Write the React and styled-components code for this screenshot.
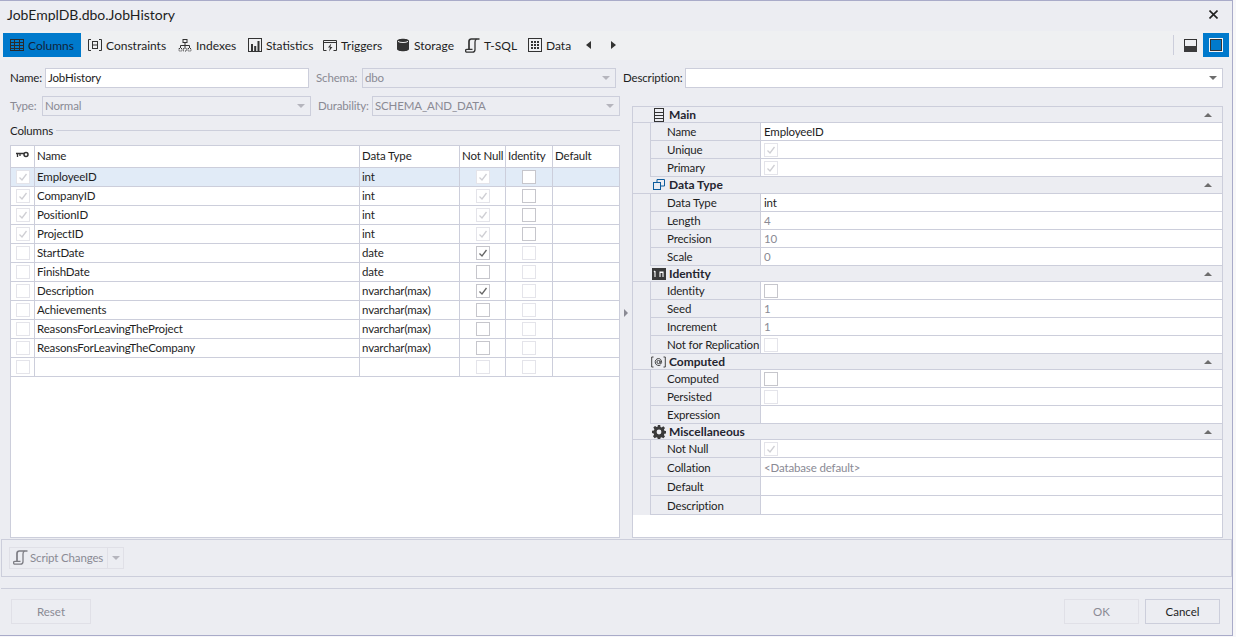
import React from "react";
import styled, { createGlobalStyle } from "styled-components";

const columns = [
  { key: true, name: "EmployeeID", type: "int", notNull: "off-checked", identity: "on" },
  { key: true, name: "CompanyID", type: "int", notNull: "off-checked", identity: "on" },
  { key: true, name: "PositionID", type: "int", notNull: "off-checked", identity: "on" },
  { key: true, name: "ProjectID", type: "int", notNull: "off-checked", identity: "on" },
  { name: "StartDate", type: "date", notNull: "checked", identity: "off" },
  { name: "FinishDate", type: "date", notNull: "on", identity: "off" },
  { name: "Description", type: "nvarchar(max)", notNull: "checked", identity: "off" },
  { name: "Achievements", type: "nvarchar(max)", notNull: "on", identity: "off" },
  { name: "ReasonsForLeavingTheProject", type: "nvarchar(max)", notNull: "on", identity: "off" },
  { name: "ReasonsForLeavingTheCompany", type: "nvarchar(max)", notNull: "on", identity: "off" },
  { name: "", type: "", notNull: "off", identity: "off" },
];

const TableIcon = ({ color = "#2b2b2b" }) => (
  <svg width="14" height="14" viewBox="0 0 14 14" fill="none" stroke={color}>
    <rect x="0.5" y="1.5" width="13" height="11" />
    <path d="M0.5 4.5h13M0.5 7.5h13M0.5 10.5h13M4.5 2v10M9.5 2v10" />
  </svg>
);

const ConstraintsIcon = () => (
  <svg width="14" height="14" viewBox="0 0 14 14" fill="none" stroke="#333">
    <path d="M3 1.5H0.5v11H3M11 1.5h2.5v11H11" />
    <rect x="4.5" y="3.5" width="5" height="7" />
    <path d="M4.5 7h5" />
  </svg>
);

const IndexesIcon = () => (
  <svg width="14" height="14" viewBox="0 0 14 14" fill="none" stroke="#333">
    <rect x="5" y="1.5" width="4" height="3" />
    <path d="M7 4.5v3M2.5 10V7.5h9V10M7 7.5V10" />
    <path d="M1 10.5h3v2.5H1zM5.5 10.5h3v2.5h-3zM10 10.5h3v2.5h-3z" strokeDasharray="1 1" />
  </svg>
);

const StatisticsIcon = () => (
  <svg width="14" height="14" viewBox="0 0 14 14" fill="none">
    <rect x="0.5" y="0.5" width="13" height="13" stroke="#333" />
    <path d="M3 6h2v7H3zM6.2 8h2v5h-2zM9.5 3h2v10h-2z" fill="#333" />
  </svg>
);

const TriggersIcon = () => (
  <svg width="14" height="14" viewBox="0 0 14 14" fill="none">
    <path d="M0.5 12.5v-10h13v10h-3M0.5 12.5h3M0.5 4.5h13" stroke="#333" />
    <path d="M8.2 5.5 5 9.5h2l-1 4 3.4-4.6H7.4z" fill="#333" />
  </svg>
);

const StorageIcon = () => (
  <svg width="14" height="14" viewBox="0 0 14 14">
    <path d="M1 3c0-3 12-3 12 0v8c0 3-12 3-12 0z" fill="#333" />
    <path d="M2 3.4c1.5 1.5 8.500 1.500 10 0" fill="none" stroke="#eee" />
  </svg>
);

const ScriptIcon = ({ color = "#333" }) => (
  <svg width="15" height="15" viewBox="0 0 15 15" fill="none">
    <path d="M4 11.500V3.500C4 2 5 1 6.300 1H14.500" stroke={color} strokeWidth="1.700" />
    <path d="M11.500 1.200C10.400 1.600 10 2.500 10 4v7.500c0 1.500-1 2.700-2.500 2.700H2c-1 0-1.500-.8-1.500-1.500S1 11.300 2 11.300h5.500" stroke={color} strokeWidth="1.300" />
  </svg>
);

const DataIcon = () => (
  <svg width="14" height="14" viewBox="0 0 14 14" fill="none">
    <rect x="0.5" y="0.5" width="13" height="13" stroke="#333" />
    <path d="M3 3h2v2H3zM6 3h2v2H6zM9 3h2v2H9zM3 6h2v2H3zM6 6h2v2H6zM9 6h2v2H9zM3 9h2v2H3zM6 9h2v2H6zM9 9h2v2H9z" fill="#333" />
  </svg>
);

const KeyIcon = () => (
  <svg width="13" height="8" viewBox="0 0 13 8" fill="none">
    <path d="M0 2.500h8M1.500 2.500V6M4 2.500V5" stroke="#333" strokeWidth="1.300" />
    <circle cx="10" cy="3.500" r="2" stroke="#333" strokeWidth="1.500" />
  </svg>
);

const MainGroupIcon = () => (
  <svg width="10" height="14" viewBox="0 0 10 14" fill="none" stroke="#333">
    <rect x="0.500" y="0.500" width="9" height="13" />
    <path d="M0.500 4.500h9M0.500 7.500h9M0.500 10.500h9" />
  </svg>
);

const DataTypeGroupIcon = () => (
  <svg width="12" height="11" viewBox="0 0 12 11" fill="none" stroke="#0e5c9c">
    <rect x="0.500" y="3.500" width="7" height="7" />
    <path d="M4 3.500V0.500h7.500v6.500H7.500" />
  </svg>
);

const IdentityGroupIcon = () => (
  <svg width="14" height="12" viewBox="0 0 14 12">
    <rect width="14" height="12" fill="#3a3a3a" />
    <path d="M3 3v6M2 4l1-1M8 9V4h3v5M8 4.500h3" fill="none" stroke="#fff" strokeWidth="1.100" />
  </svg>
);

const ComputedGroupIcon = () => (
  <svg width="15" height="12" viewBox="0 0 15 12" fill="none" stroke="#444">
    <path d="M2.500 1H.7v10h1.800M12.500 1h1.800v10h-1.800" />
    <circle cx="7.500" cy="6" r="1.600" />
    <path d="M9.100 4.500V7c0 1 1.500 1 1.500-.5C10.600 4 9.300 2.500 7.500 2.500A3.500 3.500 0 1 0 9.500 9" />
  </svg>
);

const GearGroupIcon = () => (
  <svg width="14" height="14" viewBox="0 0 14 14">
    <path
      d="M5.800 0h2.400l.3 1.900 1.200.5 1.600-1.100 1.700 1.700-1.100 1.600.5 1.200 1.900.3v2.400l-1.900.3-.5 1.200 1.100 1.600-1.700 1.700-1.600-1.100-1.200.5-.3 1.900H5.800l-.3-1.900-1.200-.5-1.600 1.100L1 11.200l1.100-1.600-.5-1.200L0 8.100V5.700l1.900-.3.500-1.200L1.300 2.600 3 .9l1.600 1.100 1.200-.5z"
      fill="#3a3a3a"
    />
    <circle cx="7" cy="7" r="2.400" fill="#eeeef2" />
  </svg>
);

const GlobalStyle = createGlobalStyle`
  html, body {
    margin: 0;
    padding: 0;
    background: #f7f7f9;
  }
  body {
    font-family: "Lato", "Liberation Sans", sans-serif;
    font-size: 11.5px;
    letter-spacing: -0.15px;
    color: #1e1e1e;
  }
`;

const Window = styled.div`
  width: 1233px;
  height: 636px;
  box-sizing: border-box;
  background: #ecedf2;
  border-top: 1px solid #a9abc9;
  border-right: 1px solid #a9abc9;
  border-bottom: 1px solid #a9abc9;
  display: flex;
  flex-direction: column;
  overflow: hidden;
`;

const TitleBar = styled.div`
  height: 30px;
  flex: none;
  box-sizing: border-box;
  display: flex;
  align-items: center;
  justify-content: space-between;
  padding: 0 14px 4px 7px;
  font-size: 14px;
  letter-spacing: 0;
`;

const CloseGlyph = styled.svg`
  width: 9px;
  height: 9px;
`;

const Toolbar = styled.div`
  height: 29px;
  flex: none;
  box-sizing: border-box;
  background: #eff0f2;
  display: flex;
  align-items: center;
  padding: 0 3px 1px;
  font-size: 12px;
  letter-spacing: 0;
`;

const ToolButton = styled.div`
  height: 24px;
  box-sizing: border-box;
  width: ${(p) => p.$w}px;
  flex: none;
  display: flex;
  align-items: center;
  gap: 4px;
  padding-left: 7px;
  background: ${(p) => (p.$active ? "#007acc" : "transparent")};
  color: ${(p) => (p.$active ? "#10233a" : "#1e1e1e")};
  white-space: nowrap;
`;

const ArrowButton = styled.div`
  width: 25px;
  height: 24px;
  flex: none;
  display: flex;
  align-items: center;
  justify-content: center;
`;

const ToolbarSpacer = styled.div`
  flex: 1;
`;

const ToolbarDivider = styled.div`
  width: 1px;
  height: 20px;
  background: #cccedb;
  margin-right: 10px;
`;

const LayoutButton = styled.div`
  width: 26px;
  height: 24px;
  flex: none;
  display: flex;
  align-items: center;
  justify-content: center;
  margin-left: ${(p) => p.$gap || 0}px;
  background: ${(p) => (p.$active ? "#007acc" : "transparent")};
`;

const Body = styled.div`
  flex: none;
  height: 478px;
  box-sizing: border-box;
  display: flex;
  padding: 8px 9px 0 10px;
`;

const LeftPane = styled.div`
  width: 610px;
  flex: none;
  display: flex;
  flex-direction: column;
`;

const FormRow = styled.div`
  height: 20px;
  flex: none;
  display: flex;
  align-items: center;
  margin-bottom: 8px;
`;

const FieldLabel = styled.div`
  width: ${(p) => p.$w}px;
  margin-left: ${(p) => p.$ml || 0}px;
  margin-bottom: 1px;
  flex: none;
  color: ${(p) => (p.$disabled ? "#8a8a94" : "#1e1e1e")};
`;

const Field = styled.div`
  width: ${(p) => (p.$w ? `${p.$w}px` : "auto")};
  flex: ${(p) => (p.$w ? "none" : 1)};
  height: 20px;
  box-sizing: border-box;
  display: flex;
  align-items: center;
  justify-content: space-between;
  padding: 0 5px 1px 2px;
  border: 1px solid #cccedb;
  background: ${(p) => (p.$disabled ? "#ecedf2" : "#fff")};
  color: ${(p) => (p.$disabled ? "#8a8a94" : "#1e1e1e")};
`;

const DownCaret = styled.div`
  width: 0;
  height: 0;
  border-left: 4px solid transparent;
  border-right: 4px solid transparent;
  border-top: 4px solid ${(p) => (p.$disabled ? "#b5b5bd" : "#6d6d6d")};
`;

const SectionLabel = styled.div`
  display: flex;
  align-items: center;
  gap: 3px;
  height: 14px;
  margin-top: -1px;
  margin-bottom: 8px;
  &::after {
    content: "";
    flex: 1;
    height: 1px;
    background: #cccedb;
  }
`;

const GridFrame = styled.div`
  flex: none;
  height: 393px;
  box-sizing: border-box;
  border: 1px solid #cccedb;
  background: #fff;
`;

const GridRow = styled.div`
  display: grid;
  grid-template-columns: 24px 325px 100px 46px 47px 1fr;
  height: ${(p) => p.$h}px;
  box-sizing: border-box;
  border-bottom: 1px solid #cccedb;
  background: ${(p) => (p.$selected ? "#e1ebf7" : "#fff")};
`;

const GridHeaderRow = styled(GridRow)`
  & > div {
    padding-bottom: 3px;
  }
`;

const GridCell = styled.div`
  display: flex;
  align-items: center;
  justify-content: ${(p) => (p.$center ? "center" : "flex-start")};
  padding-left: ${(p) => (p.$center ? 0 : 2)}px;
  padding-bottom: ${(p) => (p.$center ? 0 : 1)}px;
  border-right: 1px solid #cccedb;
  overflow: hidden;
  white-space: nowrap;
  &:last-child {
    border-right: none;
  }
`;

const CheckFrame = styled.div`
  width: 14px;
  height: 14px;
  box-sizing: border-box;
  background: #fff;
  border: 1px solid ${(p) => (p.$faint ? "#e4e4ea" : "#c6c6cc")};
  display: flex;
  align-items: center;
  justify-content: center;
`;

const Check = ({ state }) => {
  const faint = state === "off" || state === "off-checked";
  const checked = state === "checked" || state === "off-checked";
  return (
    <CheckFrame $faint={faint}>
      {checked && (
        <svg width="10" height="10" viewBox="0 0 10 10" fill="none">
          <path d="M1.500 5.500 4 8l4.500-6" stroke={faint ? "#cfcfd4" : "#666"} strokeWidth="1.300" />
        </svg>
      )}
    </CheckFrame>
  );
};

const Splitter = styled.div`
  width: 12px;
  flex: none;
  display: flex;
  align-items: center;
  justify-content: center;
  padding-bottom: 18px;
  &::before {
    content: "";
    border-top: 4px solid transparent;
    border-bottom: 4px solid transparent;
    border-left: 4px solid #8a8a94;
  }
`;

const RightPane = styled.div`
  flex: 1;
  min-width: 0;
  display: flex;
  flex-direction: column;
`;

const DescriptionRow = styled(FormRow)`
  margin-left: 3px;
  margin-bottom: 18px;
`;

const RightBottom = styled.div`
  height: 432px;
  flex: none;
  display: flex;
`;

const PropertyPanel = styled.div`
  flex: 1;
  min-width: 0;
  box-sizing: border-box;
  border: 1px solid #cccedb;
  background: #fff;
  display: flex;
  flex-direction: column;
`;

const GroupHeader = styled.div`
  height: ${(p) => p.$h}px;
  flex: none;
  box-sizing: border-box;
  padding-bottom: ${(p) => (p.$h > 16 ? 1 : 0)}px;
  background: #ecedf2;
  border-bottom: 1px solid #cccedb;
  display: grid;
  grid-template-columns: 36px 1fr 18px;
  align-items: center;
  font-size: 12px;
  font-weight: 700;
  letter-spacing: 0;
  color: #252530;
`;

const GroupIconSlot = styled.div`
  display: flex;
  align-items: center;
  justify-content: center;
  padding: 0 3px 0 18px;
`;

const UpCaret = styled.div`
  width: 0;
  height: 0;
  border-left: 4px solid transparent;
  border-right: 4px solid transparent;
  border-bottom: 4px solid #6d6d6d;
`;

const PropRow = styled.div`
  height: ${(p) => (p.$tall ? 19 : 18)}px;
  flex: none;
  box-sizing: border-box;
  display: grid;
  grid-template-columns: 17px 111px 1fr;
  background: #ecedf2;
`;

const PropLabel = styled.div`
  display: flex;
  align-items: center;
  padding-left: 16px;
  border-left: 1px solid #cccedb;
  border-bottom: 1px solid #cccedb;
  border-right: 1px solid #cccedb;
  white-space: nowrap;
`;

const PropValue = styled.div`
  display: flex;
  align-items: center;
  padding-left: 3px;
  background: #fff;
  border-bottom: 1px solid #cccedb;
  color: ${(p) => (p.$muted ? "#8a8a94" : "#1e1e1e")};
`;

const ScriptBar = styled.div`
  height: 38px;
  flex: none;
  box-sizing: border-box;
  margin: 1px 0 0 1px;
  border: 1px solid #cccedb;
  display: flex;
  align-items: center;
  padding-left: 7px;
`;

const ScriptButton = styled.div`
  height: 22px;
  box-sizing: border-box;
  border: 1px solid #e0e0e7;
  display: flex;
  align-items: center;
  color: #8a8a94;
`;

const ScriptMain = styled.div`
  width: 98px;
  height: 100%;
  box-sizing: border-box;
  display: flex;
  align-items: center;
  gap: 2px;
  padding: 0 0 1px 3px;
  border-right: 1px solid #e0e0e7;
  white-space: nowrap;
`;

const ScriptCaret = styled.div`
  width: 15px;
  display: flex;
  justify-content: center;
`;

const Footer = styled.div`
  flex: 1;
  margin-top: 11px;
  margin-left: 1px;
  border-top: 1px solid #cccedb;
  display: flex;
  align-items: flex-start;
  padding: 10px 12px 0 10px;
`;

const DialogButton = styled.button`
  width: ${(p) => p.$w}px;
  height: 25px;
  margin-left: ${(p) => p.$ml || 0}px;
  padding: 0;
  font: inherit;
  background: transparent;
  border: 1px solid ${(p) => (p.$disabled ? "#e0e0e7" : "#cccedb")};
  color: ${(p) => (p.$disabled ? "#8a8a94" : "#1e1e1e")};
`;

const FooterSpacer = styled.div`
  flex: 1;
`;

const Properties = [
  {
    title: "Main",
    height: 16,
    icon: <MainGroupIcon />,
    rows: [
      { label: "Name", value: "EmployeeID" },
      { label: "Unique", check: "off-checked" },
      { label: "Primary", check: "off-checked" },
    ],
  },
  {
    title: "Data Type",
    height: 17,
    icon: <DataTypeGroupIcon />,
    rows: [
      { label: "Data Type", value: "int" },
      { label: "Length", value: "4", muted: true },
      { label: "Precision", value: "10", muted: true },
      { label: "Scale", value: "0", muted: true },
    ],
  },
  {
    title: "Identity",
    height: 16,
    icon: <IdentityGroupIcon />,
    rows: [
      { label: "Identity", check: "on" },
      { label: "Seed", value: "1", muted: true },
      { label: "Increment", value: "1", muted: true },
      { label: "Not for Replication", check: "off" },
    ],
  },
  {
    title: "Computed",
    height: 16,
    icon: <ComputedGroupIcon />,
    rows: [
      { label: "Computed", check: "on" },
      { label: "Persisted", check: "off" },
      { label: "Expression", value: "" },
    ],
  },
  {
    title: "Miscellaneous",
    height: 16,
    icon: <GearGroupIcon />,
    rows: [
      { label: "Not Null", check: "off-checked" },
      { label: "Collation", value: "<Database default>", muted: true, tall: true },
      { label: "Default", value: "", tall: true },
      { label: "Description", value: "", tall: true },
    ],
  },
];

const App = () => {
  return (
    <>
      <GlobalStyle />
      <Window>
        <TitleBar>
          <span>JobEmplDB.dbo.JobHistory</span>
          <CloseGlyph viewBox="0 0 9 9">
            <path d="M.5.500l8 8M8.500.500l-8 8" stroke="#222" strokeWidth="1.600" />
          </CloseGlyph>
        </TitleBar>
        <Toolbar>
          <ToolButton $active $w={78}><TableIcon />Columns</ToolButton>
          <ToolButton $w={90}><ConstraintsIcon />Constraints</ToolButton>
          <ToolButton $w={70}><IndexesIcon />Indexes</ToolButton>
          <ToolButton $w={75}><StatisticsIcon />Statistics</ToolButton>
          <ToolButton $w={73}><TriggersIcon />Triggers</ToolButton>
          <ToolButton $w={69}><StorageIcon />Storage</ToolButton>
          <ToolButton $w={63}><ScriptIcon />T-SQL</ToolButton>
          <ToolButton $w={55}><DataIcon />Data</ToolButton>
          <ArrowButton>
            <svg width="5" height="8" viewBox="0 0 5 8"><path d="M5 0v8L0 4z" fill="#333" /></svg>
          </ArrowButton>
          <ArrowButton>
            <svg width="5" height="8" viewBox="0 0 5 8"><path d="M0 0v8l5-4z" fill="#333" /></svg>
          </ArrowButton>
          <ToolbarSpacer />
          <ToolbarDivider />
          <svg width="13" height="13" viewBox="0 0 13 13">
            <rect x="0.500" y="0.500" width="12" height="12" fill="none" stroke="#333" />
            <rect x="0" y="7" width="13" height="6" fill="#3c3c3c" />
          </svg>
          <LayoutButton $active $gap={6}>
            <svg width="14" height="14" viewBox="0 0 14 14">
              <rect x="0.500" y="0.500" width="13" height="13" fill="#f4f4f4" stroke="#f4f4f4" />
              <rect x="1.500" y="1.500" width="11" height="11" fill="#007acc" stroke="#333" />
            </svg>
          </LayoutButton>
        </Toolbar>
        <Body>
          <LeftPane>
            <FormRow>
              <FieldLabel $w={35}>Name:</FieldLabel>
              <Field $w={264}>JobHistory</Field>
              <FieldLabel $w={46} $ml={7} $disabled>Schema:</FieldLabel>
              <Field $w={254} $disabled>dbo<DownCaret $disabled /></Field>
            </FormRow>
            <FormRow>
              <FieldLabel $w={32} $disabled>Type:</FieldLabel>
              <Field $w={269} $disabled>Normal<DownCaret $disabled /></Field>
              <FieldLabel $w={54} $ml={7} $disabled>Durability:</FieldLabel>
              <Field $w={248} $disabled>SCHEMA_AND_DATA<DownCaret $disabled /></Field>
            </FormRow>
            <SectionLabel>Columns</SectionLabel>
            <GridFrame>
              <GridHeaderRow $h={22}>
                <GridCell $center><KeyIcon /></GridCell>
                <GridCell>Name</GridCell>
                <GridCell>Data Type</GridCell>
                <GridCell>Not Null</GridCell>
                <GridCell>Identity</GridCell>
                <GridCell>Default</GridCell>
              </GridHeaderRow>
              {columns.map((col, i) => (
                <GridRow key={i} $h={19} $selected={i === 0}>
                  <GridCell $center><Check state={col.key ? "off-checked" : "off"} /></GridCell>
                  <GridCell>{col.name}</GridCell>
                  <GridCell>{col.type}</GridCell>
                  <GridCell $center><Check state={col.notNull} /></GridCell>
                  <GridCell $center><Check state={col.identity} /></GridCell>
                  <GridCell />
                </GridRow>
              ))}
            </GridFrame>
          </LeftPane>
          <RightPane>
            <DescriptionRow>
              <FieldLabel $w={62}>Description:</FieldLabel>
              <Field><span /><DownCaret /></Field>
            </DescriptionRow>
            <RightBottom>
              <Splitter />
              <PropertyPanel>
                {Properties.map((group) => (
                  <React.Fragment key={group.title}>
                    <GroupHeader $h={group.height}>
                      <GroupIconSlot>{group.icon}</GroupIconSlot>
                      <span>{group.title}</span>
                      <UpCaret />
                    </GroupHeader>
                    {group.rows.map((row) => (
                      <PropRow key={row.label} $tall={row.tall}>
                        <span />
                        <PropLabel>{row.label}</PropLabel>
                        <PropValue $muted={row.muted}>
                          {row.check ? <Check state={row.check} /> : row.value}
                        </PropValue>
                      </PropRow>
                    ))}
                  </React.Fragment>
                ))}
              </PropertyPanel>
            </RightBottom>
          </RightPane>
        </Body>
        <ScriptBar>
          <ScriptButton>
            <ScriptMain><ScriptIcon color="#7d7d84" />Script Changes</ScriptMain>
            <ScriptCaret><DownCaret $disabled /></ScriptCaret>
          </ScriptButton>
        </ScriptBar>
        <Footer>
          <DialogButton $w={80} $disabled>Reset</DialogButton>
          <FooterSpacer />
          <DialogButton $w={75} $disabled>OK</DialogButton>
          <DialogButton $w={75} $ml={6}>Cancel</DialogButton>
        </Footer>
      </Window>
    </>
  );
};

export default App;
